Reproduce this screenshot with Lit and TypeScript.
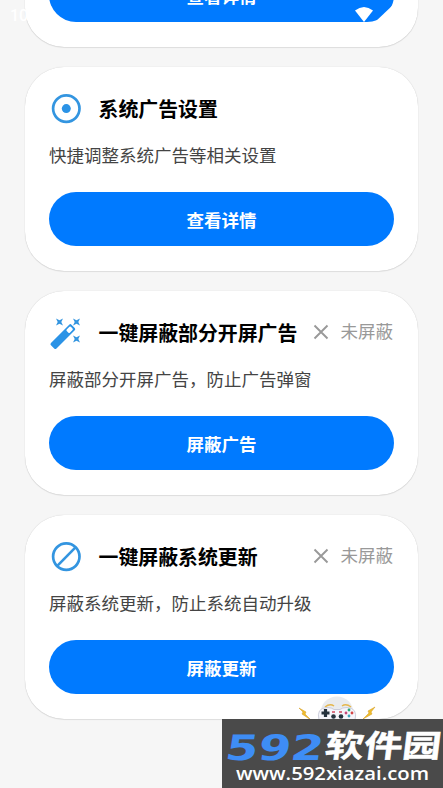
import { LitElement, html, css, svg, nothing } from "lit";
import { customElement, property } from "lit/decorators.js";

const icons: Record<string, unknown> = {
  target: svg`<circle cx="17.3" cy="16.6" r="13.2" fill="none" stroke="#3395e0" stroke-width="2.7"/><circle cx="17.3" cy="16.6" r="4.5" fill="#2b93e6"/>`,
  wand: svg`<g transform="translate(14.2 20.2) rotate(-45)">
      <rect x="-15" y="-3.9" width="29" height="7.8" rx="1.6" fill="#2b93e6"/>
      <rect x="6.2" y="-2.2" width="5.8" height="4.4" rx="1" fill="#fff"/></g>
    <g fill="#3395e0">
      <path d="M7 2.500l3.500 1.700L14 2.500l-1.700 3.500L14 9.500l-3.500-1.700L7 9.500l1.700-3.500z"/>
      <path d="M24 2.500l3.500 1.700L31 2.500l-1.700 3.500L31 9.500l-3.500-1.700L24 9.500l1.700-3.500z"/>
      <path d="M24 19.500l3.500 1.700L31 19.500l-1.700 3.500L31 26.500l-3.500-1.700L24 26.500l1.700-3.500z"/></g>`,
  forbid: svg`<circle cx="17.3" cy="16.6" r="13.2" fill="none" stroke="#3395e0" stroke-width="2.7"/><path d="M8.3 25.8L26.5 7.4" stroke="#3395e0" stroke-width="2.6"/>`,
};

@customElement("tool-card")
class ToolCard extends LitElement {
  @property() icon = "";
  @property() heading = "";
  @property() text = "";
  @property() action = "";
  @property() status = "";

  static styles = css`
    :host {
      display: block;
      box-sizing: border-box;
      height: 204px;
      padding: 25px 24px 0;
      border-radius: 39px;
      background: #fff;
      box-shadow: 0 0 1px rgba(0, 0, 0, 0.22), 0 1px 1px rgba(0, 0, 0, 0.08);
    }
    .head { display: flex; align-items: center; height: 34px; }
    .icon { width: 34px; height: 34px; flex: none; }
    .heading { margin-left: 15.5px; font-size: 19.9px; font-weight: 700; color: #000; line-height: 34px; white-space: nowrap; }
    .status { display: flex; align-items: center; margin: 0 1px 0 auto; color: #999; font-size: 17.5px; height: 32px; padding-bottom: 2px; }
    .cross { width: 16px; height: 16px; margin-right: 12px; }
    .label { line-height: 30px; padding-bottom: 2px; }
    .text { margin: 16px 0 0; height: 26px; font-size: 17.5px; line-height: 26px; color: #444; white-space: nowrap; }
    .action {
      display: block; box-sizing: border-box; width: 100%; height: 54px; margin: 24px 0 0; padding: 1px 0 0; border: 0;
      border-radius: 27px; background: #007aff; color: #fff;
      font: 700 17.5px/53px "Noto Sans CJK SC", sans-serif;
    }
  `;

  render() {
    return html`
      <div class="head">
        <svg class="icon" viewBox="0 0 34 34">${icons[this.icon] ?? nothing}</svg>
        <span class="heading">${this.heading}</span>
        ${this.status
          ? html`<span class="status">
              <svg class="cross" viewBox="0 0 16 16"><path d="M1.5 1.5l13 13M14.5 1.5l-13 13" stroke="#999" stroke-width="1.9"/></svg><span class="label">${this.status}</span></span>`
          : nothing}
      </div>
      <p class="text">${this.text}</p>
      <button class="action">${this.action}</button>
    `;
  }
}

@customElement("app-root")
class AppRoot extends LitElement {
  static styles = css`
    :host {
      display: block; position: relative; height: 788px; overflow: hidden;
      background: #f6f6f6; font-family: "Noto Sans CJK SC", sans-serif;
    }
    .list { display: flex; flex-direction: column; gap: 20px; padding: 0 25px; margin-top: -157px; }
    .statusbar {
      position: absolute; top: 0; left: 0; right: 0; height: 28px; display: flex;
      justify-content: space-between; padding: 0 50px 0 10px; color: #fff;
    }
    .time { font: 500 16px/31px Roboto, sans-serif; }
    .signals { width: 39px; height: 28px; }
    .pad { position: absolute; left: 296px; top: 693px; width: 84px; height: 27px; }
    .mark { position: absolute; left: 222px; top: 719px; width: 221px; height: 69px; background: #4a4a4a; }
    .digits { font: 700 35px "DejaVu Sans", sans-serif; }
    .brand { font: 700 31px "Noto Sans CJK SC", sans-serif; }
    .site { font: 600 18.5px "Open Sans", sans-serif; }
  `;

  render() {
    return html`
      <div class="list">
        <tool-card action="查看详情"></tool-card>
        <tool-card icon="target" heading="系统广告设置" text="快捷调整系统广告等相关设置" action="查看详情"></tool-card>
        <tool-card icon="wand" heading="一键屏蔽部分开屏广告" text="屏蔽部分开屏广告，防止广告弹窗" action="屏蔽广告" status="未屏蔽"></tool-card>
        <tool-card icon="forbid" heading="一键屏蔽系统更新" text="屏蔽系统更新，防止系统自动升级" action="屏蔽更新" status="未屏蔽"></tool-card>
      </div>
      <div class="statusbar">
        <span class="time">10</span>
        <svg class="signals" viewBox="0 0 39 28" fill="#fff">
          <path d="M1 10.5Q10 3.5 19 10.5L10 22z"/><path d="M21 22L39 5V22z"/>
        </svg>
      </div>
      <svg class="pad" viewBox="0 0 84 27">
        <circle cx="41" cy="20" r="16.5" fill="#e9ebee"/>
        <path d="M29 14q5-4 9-1M46 13q4-3 9 1" fill="none" stroke="#e5b64c" stroke-width="1.5"/>
        <path d="M23 27q-3-12 8-12.500q5 0 7 2h6q2-2 7-2q11 .5 8 12.500z" fill="#f5f5fb" stroke="#c0c3d3" stroke-width=".8"/>
        <path d="M29.500 16v8M25.500 20h8" stroke="#24313d" stroke-width="3.2"/>
        <g fill="#26343f"><circle cx="37.5" cy="23.5" r="2.3"/><circle cx="45" cy="23.5" r="2.3"/></g>
        <path d="M36 19h3M43 19h3" stroke="#d0485d" stroke-width="1.6"/>
        <circle cx="53" cy="17" r="1.4" fill="#2fa77a"/><circle cx="53" cy="23" r="1.4" fill="#40a7be"/>
        <circle cx="50" cy="20" r="1.4" fill="#c74779"/><circle cx="56" cy="20" r="1.4" fill="#d44646"/>
        <path d="M3 15l7 4-1 2 6 6-9-6 1-2zM79 14l-7 4 1 2-6 6 9-5-1-2z" fill="#efbd2c" stroke="#d8a22b" stroke-width=".6"/>
      </svg>
      <svg class="mark" viewBox="0 0 221 69">
        <g transform="translate(2 41) skewX(-9)"><text class="digits" fill="#3e8df5" textLength="98" lengthAdjust="spacingAndGlyphs">592</text></g>
        <g transform="translate(102 38) skewX(-7)"><text class="brand" fill="#fff" stroke="#fff" stroke-width=".5" textLength="116" lengthAdjust="spacingAndGlyphs">软件园</text></g>
        <text class="site" x="14" y="61" fill="#fff" textLength="193" lengthAdjust="spacingAndGlyphs">www.592xiazai.com</text>
      </svg>
    `;
  }
}
